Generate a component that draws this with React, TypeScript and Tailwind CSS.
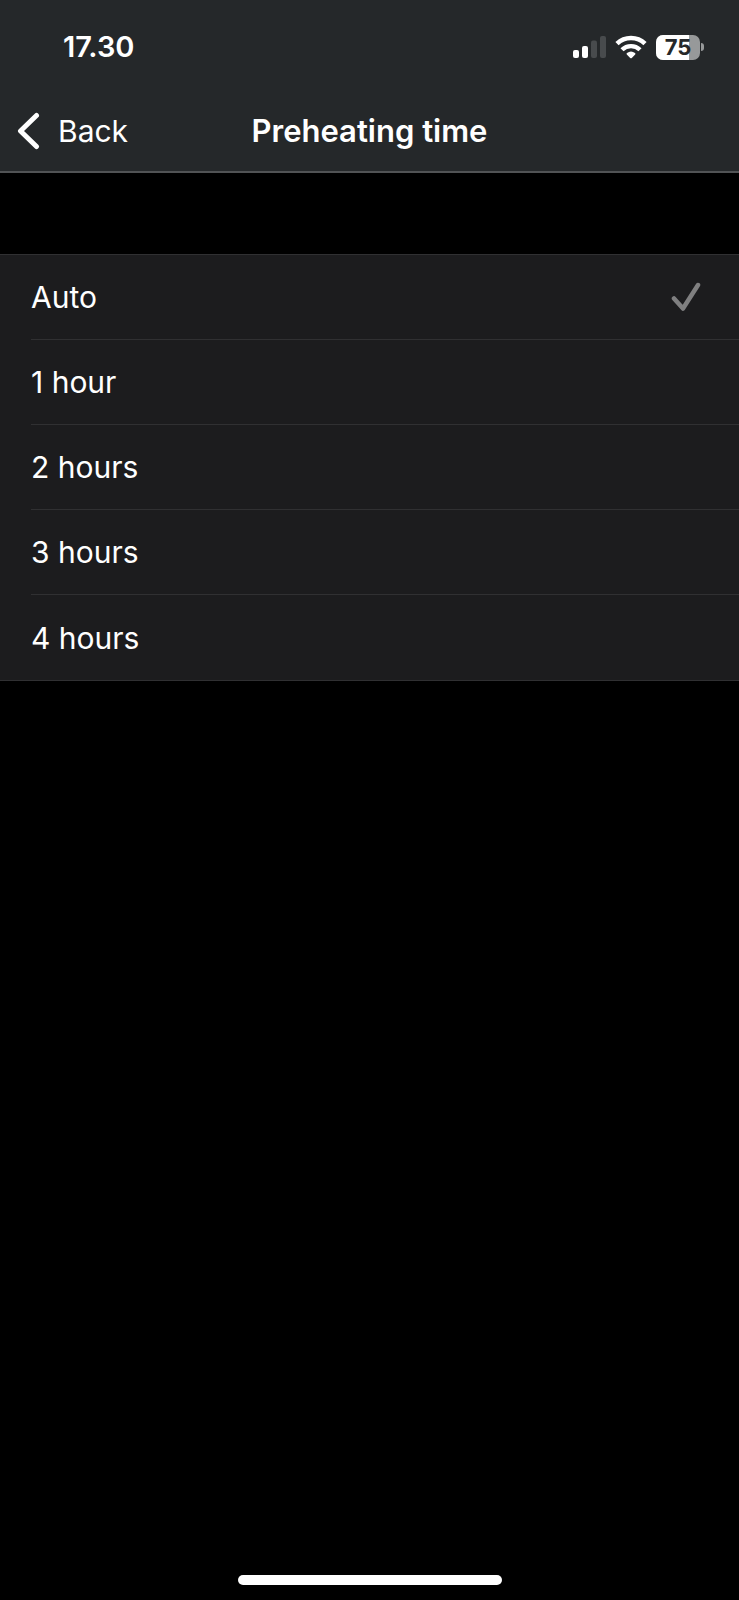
import * as React from 'react';

const OPTIONS = ['Auto', '1 hour', '2 hours', '3 hours', '4 hours'];

function SignalIcon() {
  return (
    <svg width="33" height="24" viewBox="0 0 33 24" aria-hidden="true">
      <rect x="0" y="15" width="6" height="8" rx="2" fill="#fff" />
      <rect x="9" y="11" width="6" height="12" rx="2" fill="#fff" />
      <rect x="18" y="5.5" width="6" height="17.5" rx="2" fill="#484b4d" />
      <rect x="27" y="1" width="6" height="22" rx="2" fill="#484b4d" />
    </svg>
  );
}

function WifiIcon() {
  return (
    <svg width="32" height="24" viewBox="0 0 32 24" fill="none" stroke="#fff" aria-hidden="true">
      <path d="M2 8.6a20.2 20.2 0 0 1 28 0" strokeWidth="4.6" />
      <path d="M7 14.8a12.8 12.8 0 0 1 18 0" strokeWidth="4.4" />
      <path d="M15.2 23l-3.4-3.5q-.7-.9.2-1.5a6.6 6.6 0 0 1 8 0q.9.6.2 1.5l-3.4 3.5q-.8.7-1.6 0z" fill="#fff" stroke="none" />
    </svg>
  );
}

function Battery({ level }: { level: number }) {
  return (
    <div className="flex items-center gap-px">
      <div className="relative flex h-[25px] w-11 items-center justify-center overflow-hidden rounded-[7px] bg-[#97999a]">
        <div className="absolute inset-y-0 left-0 bg-white" style={{ width: `${level}%` }} />
        <span className="relative text-[22px] leading-6 font-bold text-[#25282a]">{level}</span>
      </div>
      <div className="h-2 w-[3px] rounded-r-full bg-[#97999a]" />
    </div>
  );
}

export default function App() {
  const [selected, setSelected] = React.useState('Auto');

  return (
    <div className="flex min-h-screen flex-col bg-black font-['Inter',sans-serif] text-white">
      <header className="border-b-2 border-[#515355] bg-[#25282a]">
        <div className="flex h-[94px] items-center justify-between pr-[35px] pl-[63px]">
          <span className="text-[29px] leading-8 font-semibold">17.30</span>
          <div className="flex items-center gap-[9px]">
            <SignalIcon />
            <WifiIcon />
            <Battery level={75} />
          </div>
        </div>
        <nav className="grid h-[77px] grid-cols-[1fr_auto_1fr] items-center px-4 pb-1">
          <button type="button" className="flex items-center gap-[18px] justify-self-start text-[30px] leading-10">
            <svg width="24" height="38" viewBox="0 0 24 38" fill="none" stroke="#fff" strokeWidth="5" strokeLinecap="round" strokeLinejoin="round" aria-hidden="true">
              <path d="M20.5 3.5L4.5 19L20.5 34.5" />
            </svg>
            Back
          </button>
          <h1 id="screen-title" className="text-[31px] leading-10 font-semibold">Preheating time</h1>
        </nav>
      </header>

      <main className="flex-1 pt-[81px]">
        <div role="radiogroup" aria-labelledby="screen-title" className="border-y border-[#303032] bg-[#1c1c1e]">
          {OPTIONS.map((option, i) => (
            <label key={option} className="flex cursor-pointer pl-[31px]">
              <input
                type="radio"
                name="preheating"
                value={option}
                checked={selected === option}
                onChange={() => setSelected(option)}
                className="sr-only"
              />
              <span
                className={`flex h-[85px] flex-1 items-center justify-between pr-[38px] text-[30px] leading-10 ${
                  i < OPTIONS.length - 1 ? 'border-b border-[#303032]' : ''
                }`}
              >
                {option}
                {selected === option && (
                  <svg width="30" height="30" viewBox="0 0 30 30" fill="none" stroke="#7f7f80" strokeWidth="4.5" strokeLinecap="round" strokeLinejoin="round" aria-hidden="true">
                    <path d="M3 16.5L12 26.5L27 3" />
                  </svg>
                )}
              </span>
            </label>
          ))}
        </div>
      </main>

      <footer className="flex justify-center pb-[15px]">
        <div className="h-[10px] w-[264px] rounded-full bg-white" />
      </footer>
    </div>
  );
}
